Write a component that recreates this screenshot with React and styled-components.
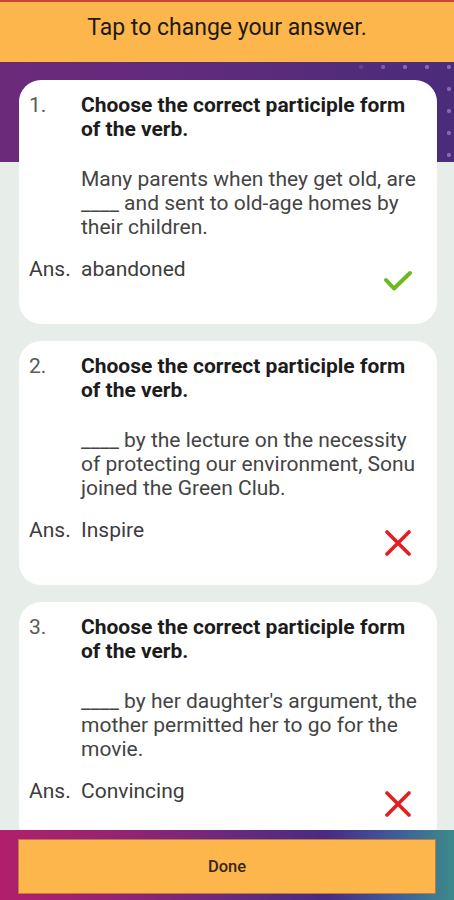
import React from "react";
import styled, { createGlobalStyle } from "styled-components";

const Global = createGlobalStyle`
  html, body { margin: 0; padding: 0; }
  body { font-family: Roboto, "Noto Sans", "Liberation Sans", sans-serif; background: #e7eeea; }
  * { box-sizing: border-box; }
`;

const Screen = styled.div`
  width: 454px;
  height: 900px;
  display: flex;
  flex-direction: column;
  overflow: hidden;
  background: #e7eeea;
`;

const Header = styled.header`
  flex: 0 0 62px;
  border-top: 2px solid #c8463a;
  background: #fdb64b;
  display: flex;
  justify-content: center;
  padding-top: 11px;
  font-size: 23px;
  line-height: 30px;
  color: #1e1a14;
`;

const Scroller = styled.main`
  position: relative;
  flex: 1;
  overflow: hidden;
  padding: 18px 17px 0 19px;
  display: flex;
  flex-direction: column;
  gap: 17px;
  background: linear-gradient(90deg, #6d2a7b 0%, #5e2b7c 50%, #4a2c7b 100%) top / 100% 100px no-repeat, #e7eeea;
`;

const Dots = styled.div`
  position: absolute;
  top: 0;
  right: 0;
  width: 110px;
  height: 100px;
  background-image: radial-gradient(circle, rgba(190, 150, 230, 0.55) 1.8px, transparent 2.4px);
  background-size: 22px 22px;
  background-position: 6px -6px;
  -webkit-mask-image: linear-gradient(90deg, transparent 0%, #000 45%);
  mask-image: linear-gradient(90deg, transparent 0%, #000 45%);
`;

const Card = styled.section`
  position: relative;
  flex: 0 0 auto;
  background: #fff;
  border-radius: 22px;
  padding: 13px 15px 29px 10px;
  display: grid;
  grid-template-columns: 52px 1fr;
  font-size: 21px;
  line-height: 24px;
  color: #404040;
`;

const Num = styled.div`
  color: #5a5a5a;
`;

const Title = styled.div`
  font-weight: 700;
  color: #1c1c1c;
`;

const Body = styled.div`
  grid-column: 2;
  margin-top: 26px;
  color: #444;
`;

const AnsLabel = styled.div`
  margin-top: 18px;
  color: #3c3c3c;
`;

const AnsRow = styled.div`
  margin-top: 18px;
  display: flex;
  justify-content: space-between;
  align-items: flex-start;
  color: #3c3c3c;
`;

const Mark = styled.svg`
  margin-top: 12px;
  margin-right: 9px;
  width: 30px;
  height: 26px;
  flex: 0 0 auto;
`;

const Footer = styled.footer`
  flex: 0 0 70px;
  padding: 9px 18px 6px 18px;
  background: linear-gradient(90deg, #b21f6c 0%, #8f2475 30%, #612a7f 55%, #4a2a82 72%, #3f5f9c 88%, #3d8a8a 100%);
  display: flex;
`;

const DoneButton = styled.button`
  flex: 1;
  border: 1px solid rgba(110, 50, 60, 0.45);
  background: #fdb64b;
  font-family: Roboto, "Noto Sans", sans-serif;
  font-size: 16.5px;
  font-weight: 500;
  color: #35281c;
  cursor: pointer;
`;

const Check = () => (
  <Mark viewBox="0 0 30 26">
    <path d="M3 11 L11 19.5 L27 4" fill="none" stroke="#6bb81f" strokeWidth="4" strokeLinecap="round" strokeLinejoin="round" />
  </Mark>
);

const Cross = () => (
  <Mark viewBox="0 0 30 26">
    <path d="M4 2 L26 24 M26 2 L4 24" fill="none" stroke="#e41d22" strokeWidth="3.6" strokeLinecap="round" />
  </Mark>
);

const questions = [
  {
    n: "1.",
    body: "Many parents when they get old, are ____ and sent to old-age homes by their children.",
    ans: "abandoned",
    ok: true,
  },
  {
    n: "2.",
    body: "____ by the lecture on the necessity of protecting our environment, Sonu joined the Green Club.",
    ans: "Inspire",
    ok: false,
  },
  {
    n: "3.",
    body: "____ by her daughter's argument, the mother permitted her to go for the movie.",
    ans: "Convincing",
    ok: false,
  },
];

export default function App() {
  return (
    <>
      <Global />
      <Screen>
        <Header>Tap to change your answer.</Header>
        <Scroller>
          <Dots />
          {questions.map((q) => (
            <Card key={q.n}>
              <Num>{q.n}</Num>
              <Title>Choose the correct participle form of the verb.</Title>
              <Body>{q.body}</Body>
              <AnsLabel>Ans.</AnsLabel>
              <AnsRow>
                <span>{q.ans}</span>
                {q.ok ? <Check /> : <Cross />}
              </AnsRow>
            </Card>
          ))}
        </Scroller>
        <Footer>
          <DoneButton>Done</DoneButton>
        </Footer>
      </Screen>
    </>
  );
}
